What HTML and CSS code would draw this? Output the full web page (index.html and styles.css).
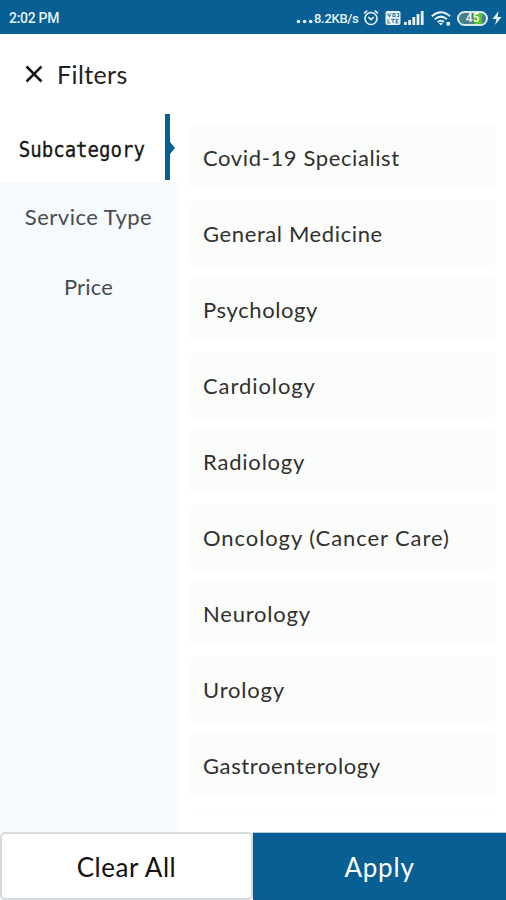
FILE: index.html
```html
<!DOCTYPE html>
<html lang="en">
<head>
<meta charset="utf-8">
<title>Filters</title>
<link rel="stylesheet" href="styles.css">
</head>
<body>
<div class="screen">
  <div class="status">
    <span class="time">2:02 PM</span>
    <div class="indicators">
      <svg class="dots" width="18" height="18" viewBox="0 0 18 18"><circle cx="2.5" cy="12.5" r="1.8"/><circle cx="8.6" cy="12.5" r="1.8"/><circle cx="14.7" cy="12.5" r="1.8"/></svg>
      <span class="speed">8.2KB/s</span>
      <svg class="alarm" width="16" height="18" viewBox="0 0 16 18"><g fill="none" stroke="#e8f3f8" stroke-width="1.6"><circle cx="8" cy="9.5" r="6"/><path d="M1 4.3 4.3 1.6M15 4.3 11.7 1.6M5.2 8l2.8 2.6L10.8 8"/></g></svg>
      <svg class="volte" width="16" height="18" viewBox="0 0 16 18"><rect x=".5" y="2" width="15" height="14" rx="2"/><g fill="none" stroke="#477f9e" stroke-width="1.1"><path d="m2.500 4.300 1.800 3.300 1.800-3.300M8 4.500h2v3H8zM11.700 4.500h2v3h-2M3 10v4h2.400M6.200 10.400h3.600M8 10.400V14M13.600 10.400h-2.400V14h2.400M11.200 12.200h2"/></g></svg>
      <svg class="signal" width="20" height="18" viewBox="0 0 20 18"><path d="M0 13h2.800v3H0zM4.200 11H7v5H4.200zM8.400 8h2.800v8H8.400zM12.600 5h2.800v11h-2.800zM16.800 2h2.800v14h-2.800z"/></svg>
      <svg class="wifi" width="20" height="18" viewBox="0 0 20 18"><g fill="none" stroke="#e8f3f8" stroke-width="2"><path d="M.8 7.300q9-8 18.200 0M3.900 10.300q6-5.300 12 0M6.700 13q3.200-2.600 6.300 0"/></g><path d="m7.800 14.300 2.100 2.300 2.100-2.300q-2-1.300-4.200 0zM15.500 13h3.500v3.500h-3.500z"/></svg>
      <div class="battery"><span>45</span></div>
      <svg class="bolt" width="10" height="18" viewBox="0 0 10 18"><path d="M6.500 2 .5 10h4L3 16l6.500-8h-4z"/></svg>
    </div>
  </div>
  <header class="header">
    <svg width="18" height="18" viewBox="0 0 18 18"><path d="m1.500 1.500 15 15m0-15-15 15" fill="none" stroke="#171717" stroke-width="2.500"/></svg>
    <h1>Filters</h1>
  </header>
  <main class="content">
    <nav class="tabs">
      <div class="tab active"><span>Subcategory</span></div>
      <div class="tab"><span>Service Type</span></div>
      <div class="tab"><span class="price">Price</span></div>
    </nav>
    <div class="options">
      <div class="option"><span class="snug">Covid-19 Specialist</span></div>
      <div class="option"><span class="snug">General Medicine</span></div>
      <div class="option"><span class="snug">Psychology</span></div>
      <div class="option"><span class="wide">Cardiology</span></div>
      <div class="option"><span>Radiology</span></div>
      <div class="option"><span class="wide">Oncology (Cancer Care)</span></div>
      <div class="option"><span>Neurology</span></div>
      <div class="option"><span>Urology</span></div>
      <div class="option"><span class="snug">Gastroenterology</span></div>
      <div class="option"></div>
    </div>
  </main>
  <footer class="actions">
    <button class="clear">Clear All</button>
    <button class="apply">Apply</button>
  </footer>
</div>
</body>
</html>
```
FILE: styles.css
```css
* { box-sizing: border-box; }
body { margin: 0; background: #fff; font-family: Lato, sans-serif; color: #303030; }
.screen { width: 506px; height: 900px; display: flex; flex-direction: column; overflow: hidden; }
.status { height: 34px; flex: none; background: #075f93; color: #e8f3f8; display: flex; align-items: center; justify-content: space-between; padding: 2px 4px 0 9px; font: 500 14px Roboto, sans-serif; }
.time { letter-spacing: -.3px; }
.indicators { display: flex; align-items: center; }
.indicators svg { fill: #e8f3f8; flex: none; }
.speed { font-size: 13px; width: 45px; letter-spacing: -.3px; white-space: nowrap; }
.alarm { margin-left: 4px; }
.volte { margin-left: 6px; }
.signal { margin-left: 3px; }
.wifi { margin-left: 7px; }
.battery { width: 31px; height: 15px; margin-left: 6px; border: 2px solid #d9e9e9; border-radius: 8px; background: linear-gradient(90deg, #477f8e 55%, #4fc42f 55% 85%, #477f8e 85%); text-align: center; font-size: 12px; line-height: 11px; color: #fff; }
.bolt { margin-left: 4px; }
.header { height: 80px; flex: none; display: flex; align-items: center; gap: 14px; padding-left: 25px; }
h1 { margin: 0; font-size: 25px; font-weight: 400; line-height: 32px; letter-spacing: .4px; color: #222; }
.content { height: 718px; flex: none; display: flex; overflow: hidden; }
.tabs { width: 177px; flex: none; background: #f5fafd; font-size: 22px; letter-spacing: .5px; color: #484c50; }
.tab { height: 70px; display: flex; align-items: center; justify-content: center; padding-bottom: 2px; }
.price { letter-spacing: .2px; }
.tab.active { position: relative; height: 68px; background: #fff; color: #151515; padding: 2px 13px 0 0; }
.tab.active span { font: 22px "DejaVu Sans Mono", monospace; letter-spacing: 0; transform: scaleX(.865); -webkit-text-stroke: .3px; }
.tab.active::before { content: ""; position: absolute; right: 7px; top: 0; width: 5px; height: 66px; background: #075f93; }
.tab.active::after { content: ""; position: absolute; right: 2px; top: 28px; border: 6px solid transparent; border-left: 5px solid #075f93; border-right: 0; }
.options { width: 329px; padding: 11px 10px 0 13px; }
.option { height: 65px; margin-bottom: 11px; padding: 0 0 1px 13px; border-radius: 4px; background: #fbfdfb; display: flex; align-items: center; font-size: 22px; letter-spacing: .8px; }
.snug { letter-spacing: .61px; }
.wide { letter-spacing: .92px; }
.option:last-child { height: 5px; margin: 0; background: linear-gradient(#fdfefc, #fff); }
.option span, .tab span { white-space: nowrap; }
.actions { flex: none; height: 68px; display: flex; }
.actions button { margin: 0; padding: 1px 0 0; flex: 0 0 253px; font: 26px Lato, sans-serif; letter-spacing: .55px; }
.clear { border: 2px solid #d5dadd; border-radius: 5px; background: #fff; color: #111; }
.actions .apply { border: 0; border-top: 1px solid #b5ced9; background: #075f93; color: #fff; letter-spacing: .8px; }
```
